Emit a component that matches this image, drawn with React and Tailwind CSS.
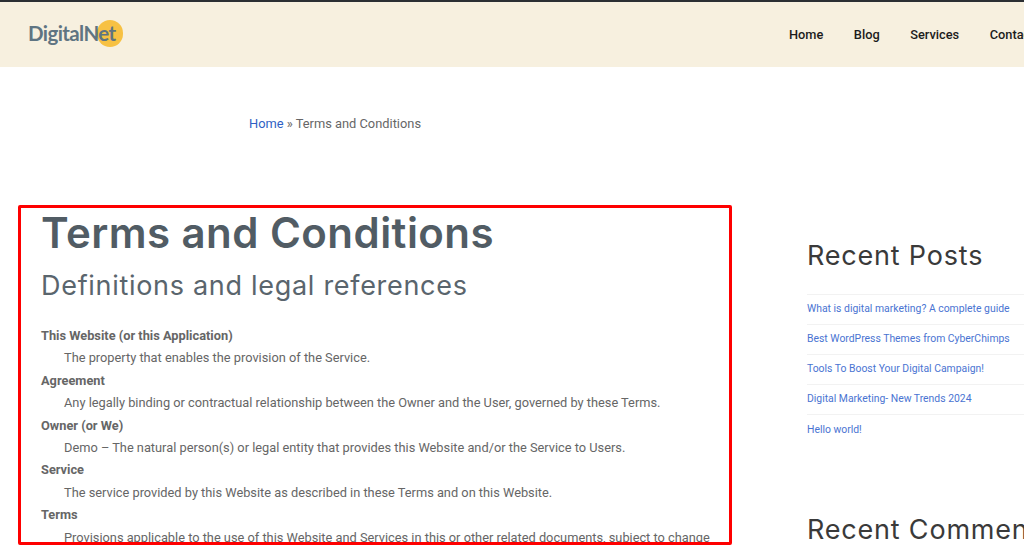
const roboto = "font-['Roboto',sans-serif]";
const heading = "font-['Inter',sans-serif]";

const definitions = [
  ["This Website (or this Application)", "The property that enables the provision of the Service."],
  ["Agreement", "Any legally binding or contractual relationship between the Owner and the User, governed by these Terms."],
  ["Owner (or We)", "Demo – The natural person(s) or legal entity that provides this Website and/or the Service to Users."],
  ["Service", "The service provided by this Website as described in these Terms and on this Website."],
  ["Terms", "Provisions applicable to the use of this Website and Services in this or other related documents, subject to change"],
];

const posts = [
  "What is digital marketing? A complete guide",
  "Best WordPress Themes from CyberChimps",
  "Tools To Boost Your Digital Campaign!",
  "Digital Marketing- New Trends 2024",
  "Hello world!",
];

const Logo = () => (
  <div className="relative w-[96px] h-[30px] flex items-center">
    <span className="absolute left-[69px] top-[0px] w-[26px] h-[27px] rounded-full bg-[#f7c143]"></span>
    <span className="relative -top-[1px] font-['Lato',sans-serif] font-bold text-[20.5px] leading-none tracking-[-0.6px] text-[#5f7482]">DigitalNet</span>
  </div>
);

const Header = () => (
  <header className="h-[67px] shrink-0 border-t-2 border-[#2b2f33] bg-[#f7f0df] flex items-center justify-between pl-[28px]">
    <Logo />
    <nav className={`flex gap-[30.5px] w-[235px] overflow-hidden whitespace-nowrap text-[12.8px] font-medium text-[#1c1c1c] ${roboto}`}>
      <a>Home</a>
      <a>Blog</a>
      <a>Services</a>
      <a>Contact</a>
    </nav>
  </header>
);

const Terms = () => (
  <section className="ml-[18px] w-[714px] h-[340px] border-[3px] border-[#fe0000] rounded-[2px] overflow-hidden pl-[20px] pt-[1px]">
    <h1 className={`${heading} font-semibold text-[42px] leading-[48px] tracking-[0.45px] text-[#515c64]`}>Terms and Conditions</h1>
    <h2 className={`mt-[11px] ${heading} text-[27px] leading-[36px] tracking-[0.7px] text-[#5a656d]`}>Definitions and legal references</h2>
    <dl className={`mt-[21px] text-[12.8px] leading-[22.4px] text-[#666666] ${roboto}`}>
      {definitions.map(([term, text]) => (
        <div key={term}>
          <dt className="font-bold">{term}</dt>
          <dd className="pl-[23px] whitespace-nowrap">{text}</dd>
        </div>
      ))}
    </dl>
  </section>
);

const Sidebar = () => (
  <aside className="ml-[75px] flex-1 min-w-0 pt-[34px] whitespace-nowrap">
    <h3 className={`${heading} text-[27px] leading-[34px] tracking-[0.8px] text-[#3a3a3a]`}>Recent Posts</h3>
    <ul className={`mt-[21px] border-t border-[#f2f2f2] text-[10.4px] text-[#4a74d2] ${roboto}`}>
      {posts.map((post, i) => (
        <li key={post} className={`h-[30.1px] pb-[2px] flex items-center ${i < 4 ? "border-b border-[#f2f2f2]" : ""}`}>
          <a>{post}</a>
        </li>
      ))}
    </ul>
    <h3 className={`mt-[68px] ${heading} text-[27px] leading-[34px] tracking-[0.8px] text-[#3a3a3a]`}>Recent Comments</h3>
  </aside>
);

export default function App() {
  return (
    <div className="h-[545px] w-full overflow-hidden bg-white flex flex-col">
      <Header />
      <p className={`mt-[49px] pl-[249px] text-[12.85px] leading-[16px] text-[#666666] ${roboto}`}>
        <a className="text-[#2f5fc4]">Home</a> » Terms and Conditions
      </p>
      <main className="mt-[73px] flex">
        <Terms />
        <Sidebar />
      </main>
    </div>
  );
}
